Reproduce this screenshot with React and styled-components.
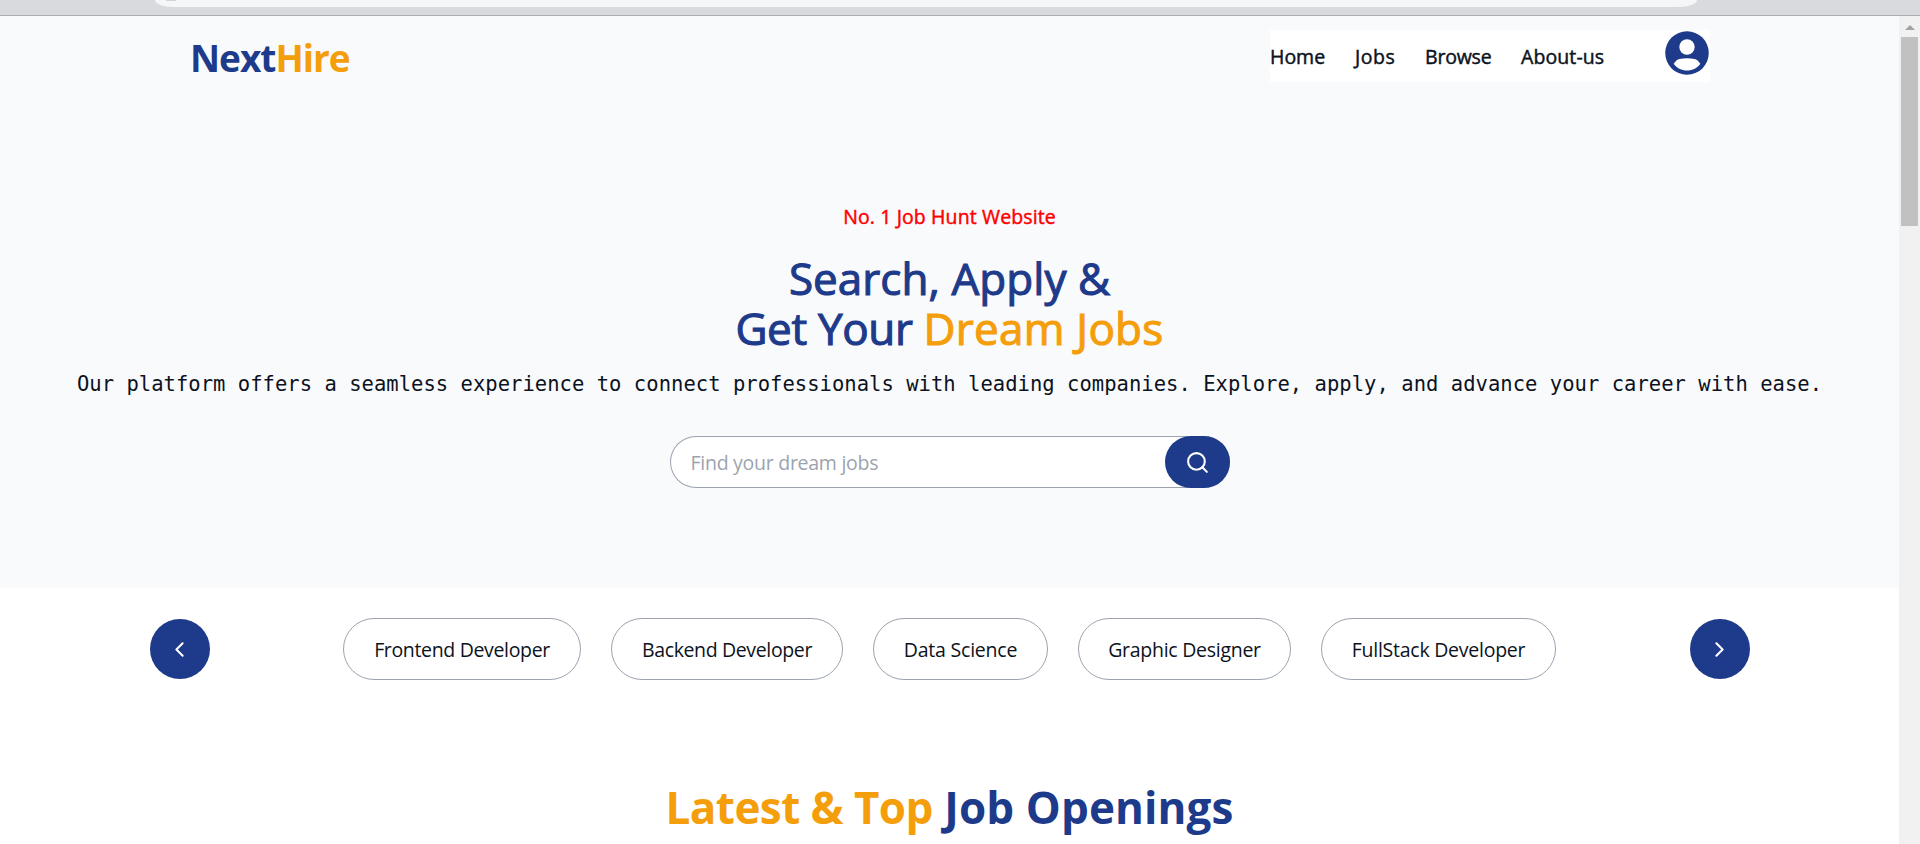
import React from "react";
import styled, { createGlobalStyle } from "styled-components";
import { Search, ChevronLeft, ChevronRight } from "lucide-react";

const NAVY = "#1e3a8a";
const AMBER = "#f59e0b";

const GlobalStyle = createGlobalStyle`
  * { box-sizing: border-box; }
  body { margin: 0; background: #fff; overflow: hidden; }
  button, input { font-family: inherit; }
`;

const Screen = styled.div`
  width: 1920px;
  height: 844px;
  overflow: hidden;
  display: flex;
  flex-direction: column;
  font-family: "Open Sans", "Noto Sans", sans-serif;
  font-size: 19.5px;
  color: #0c1220;
`;

const BrowserBar = styled.div`
  flex: none;
  height: 16px;
  padding: 0 223px 0 155px;
  background: #d9dade;
  border-bottom: 1px solid #abadb3;
`;

const AddressField = styled.div`
  height: 7px;
  padding-left: 11px;
  background: #f5f6f8;
  border-radius: 0 0 18px 18px / 0 0 7px 7px;
`;

const SiteBadge = styled.div`
  width: 10px;
  height: 1px;
  background: #d0d2d7;
`;

const Viewport = styled.div`
  flex: 1;
  min-height: 0;
  display: flex;
`;

const Page = styled.main`
  width: 1899px;
  overflow: hidden;
`;

const Scrollbar = styled.div`
  width: 21px;
  background: #f1f1f1;
  display: flex;
  flex-direction: column;
  align-items: center;
  padding-top: 9px;
`;

const ScrollArrow = styled.div`
  border: 5px solid transparent;
  border-top: 0;
  border-bottom-color: #a3a3a3;
`;

const ScrollThumb = styled.div`
  width: 17px;
  height: 189px;
  margin-top: 7px;
  background: #c1c1c1;
`;

const Hero = styled.section`
  height: 572px;
  background: #f9fafc;
  padding-top: 14px;
`;

const Header = styled.header`
  display: flex;
  justify-content: space-between;
  height: 52px;
  padding: 0 189px 0 190px;
`;

const Logo = styled.div`
  color: ${NAVY};
  font-size: 37px;
  font-weight: 700;
  line-height: 56px;
  letter-spacing: ${(p) => p.$track}px;
  white-space: nowrap;
`;

const Accent = styled.span`
  color: ${AMBER};
  letter-spacing: ${(p) => (p.$track === undefined ? "inherit" : `${p.$track}px`)};
`;

const Nav = styled.nav`
  display: flex;
  width: 440px;
  background: #fff;
`;

const NavLink = styled.a`
  width: ${(p) => p.$width}px;
  line-height: 54px;
  letter-spacing: ${(p) => p.$track}px;
  white-space: nowrap;
  -webkit-text-stroke: 0.45px currentColor;
`;

const Avatar = styled.svg`
  width: 44px;
  height: 44px;
  margin: 0.5px 1px 0 auto;
`;

const Intro = styled.div`
  display: flex;
  flex-direction: column;
  align-items: center;
  padding-top: 120px;
  white-space: nowrap;
`;

const Tagline = styled.div`
  color: #ff0000;
  line-height: 30px;
  letter-spacing: ${(p) => p.$track}px;
  -webkit-text-stroke: 0.45px currentColor;
`;

const Headline = styled.h1`
  margin: 21px 0 0;
  color: ${NAVY};
  font-size: 44px;
  font-weight: 400;
  line-height: 50px;
  text-align: center;
  -webkit-text-stroke: 1.1px currentColor;
`;

const Line = styled.span`
  display: block;
  letter-spacing: ${(p) => p.$track}px;
`;

const Lead = styled.p`
  margin: 13px 0 0;
  font-family: "DejaVu Sans Mono", monospace;
  font-size: 20.5px;
  line-height: 36px;
  letter-spacing: ${(p) => p.$track}px;
`;

const SearchBox = styled.form`
  display: flex;
  width: 560px;
  height: 52px;
  margin-top: 34px;
  background: #fff;
  border-radius: 26px;
  box-shadow: inset 0 0 0 1px #9ca3af;
`;

const SearchInput = styled.input`
  flex: 1;
  min-width: 0;
  border: 0;
  outline: 0;
  background: transparent;
  padding: 0 0 0 21px;
  font-size: 19.5px;
  letter-spacing: ${(p) => p.$track}px;
  &::placeholder { color: #9ca3af; opacity: 1; }
`;

const RoundButton = styled.button`
  display: flex;
  flex: none;
  align-items: center;
  justify-content: center;
  width: ${(p) => p.$width}px;
  height: ${(p) => p.$height}px;
  padding: 0;
  border: 0;
  border-radius: 30px;
  background: ${NAVY};
  color: #fff;
`;

const ArrowButton = styled(RoundButton)`
  padding-right: 1px;
`;

const Categories = styled.section`
  display: flex;
  align-items: center;
  justify-content: space-between;
  padding: 30px 149px 0 150px;
`;

const ChipRow = styled.div`
  display: flex;
  gap: 30px;
  margin-right: 1px;
`;

const Chip = styled.button`
  width: ${(p) => p.$width}px;
  height: 62px;
  padding: 0;
  border: 1px solid #9ca3af;
  border-radius: 31px;
  background: #fff;
  color: #0c1220;
  font-size: 19.5px;
  letter-spacing: ${(p) => p.$track}px;
  white-space: nowrap;
`;

const SectionTitle = styled.h2`
  margin: 102px 0 0;
  color: ${NAVY};
  font-size: 44px;
  font-weight: 700;
  line-height: 50px;
  text-align: center;
  letter-spacing: ${(p) => p.$track}px;
`;

const links = [
  { label: "Home", width: 85, track: 0 },
  { label: "Jobs", width: 70, track: 0.5 },
  { label: "Browse", width: 96, track: -0.2 },
  { label: "About-us", width: 100, track: 0.1 },
];

const categories = [
  { label: "Frontend Developer", width: 238, track: -0.34 },
  { label: "Backend Developer", width: 232, track: -0.36 },
  { label: "Data Science", width: 175, track: -0.22 },
  { label: "Graphic Designer", width: 213, track: -0.27 },
  { label: "FullStack Developer", width: 235, track: -0.25 },
];

export default function App() {
  return (
    <Screen>
      <GlobalStyle />
      <BrowserBar>
        <AddressField>
          <SiteBadge />
        </AddressField>
      </BrowserBar>
      <Viewport>
        <Page>
          <Hero>
            <Header>
              <Logo $track={-1}>
                Next<Accent>Hire</Accent>
              </Logo>
              <Nav>
                {links.map((l) => (
                  <NavLink key={l.label} $width={l.width} $track={l.track}>
                    {l.label}
                  </NavLink>
                ))}
                <Avatar viewBox="2 2 20 20">
                  <circle cx="12" cy="12" r="9.900" fill={NAVY} />
                  <circle cx="12" cy="9.3" r="3.5" fill="#fff" />
                  <path
                    fill="#fff"
                    d="M5.95 16.9C6.8 15.7 7.6 14.9 8.6 14.7c2.2-.4 4.600-.4 6.800 0 1 .2 1.800 1 2.650 2.200C16.800 18.800 14.500 20 12 20s-4.800-1.200-6.050-3.100z"
                  />
                </Avatar>
              </Nav>
            </Header>
            <Intro>
              <Tagline $track={0.12}>No. 1 Job Hunt Website</Tagline>
              <Headline>
                <Line $track={0.05}>Search, Apply &amp;</Line>
                <Line $track={-0.35}>
                  Get Your <Accent $track={0.25}>Dream Jobs</Accent>
                </Line>
              </Headline>
              <Lead $track={0.035}>
                Our platform offers a seamless experience to connect
                professionals with leading companies. Explore, apply, and
                advance your career with ease.
              </Lead>
              <SearchBox>
                <SearchInput $track={-0.27} placeholder="Find your dream jobs" />
                <RoundButton type="button" $width={65} $height={52}>
                  <Search size={25} strokeWidth={2} />
                </RoundButton>
              </SearchBox>
            </Intro>
          </Hero>
          <Categories>
            <ArrowButton $width={60} $height={60}>
              <ChevronLeft size={25} />
            </ArrowButton>
            <ChipRow>
              {categories.map((c) => (
                <Chip key={c.label} $width={c.width} $track={c.track}>
                  {c.label}
                </Chip>
              ))}
            </ChipRow>
            <ArrowButton $width={60} $height={60}>
              <ChevronRight size={25} />
            </ArrowButton>
          </Categories>
          <SectionTitle $track={0.1}>
            <Accent $track={-0.55}>Latest &amp; Top</Accent> Job Openings
          </SectionTitle>
        </Page>
        <Scrollbar>
          <ScrollArrow />
          <ScrollThumb />
        </Scrollbar>
      </Viewport>
    </Screen>
  );
}
